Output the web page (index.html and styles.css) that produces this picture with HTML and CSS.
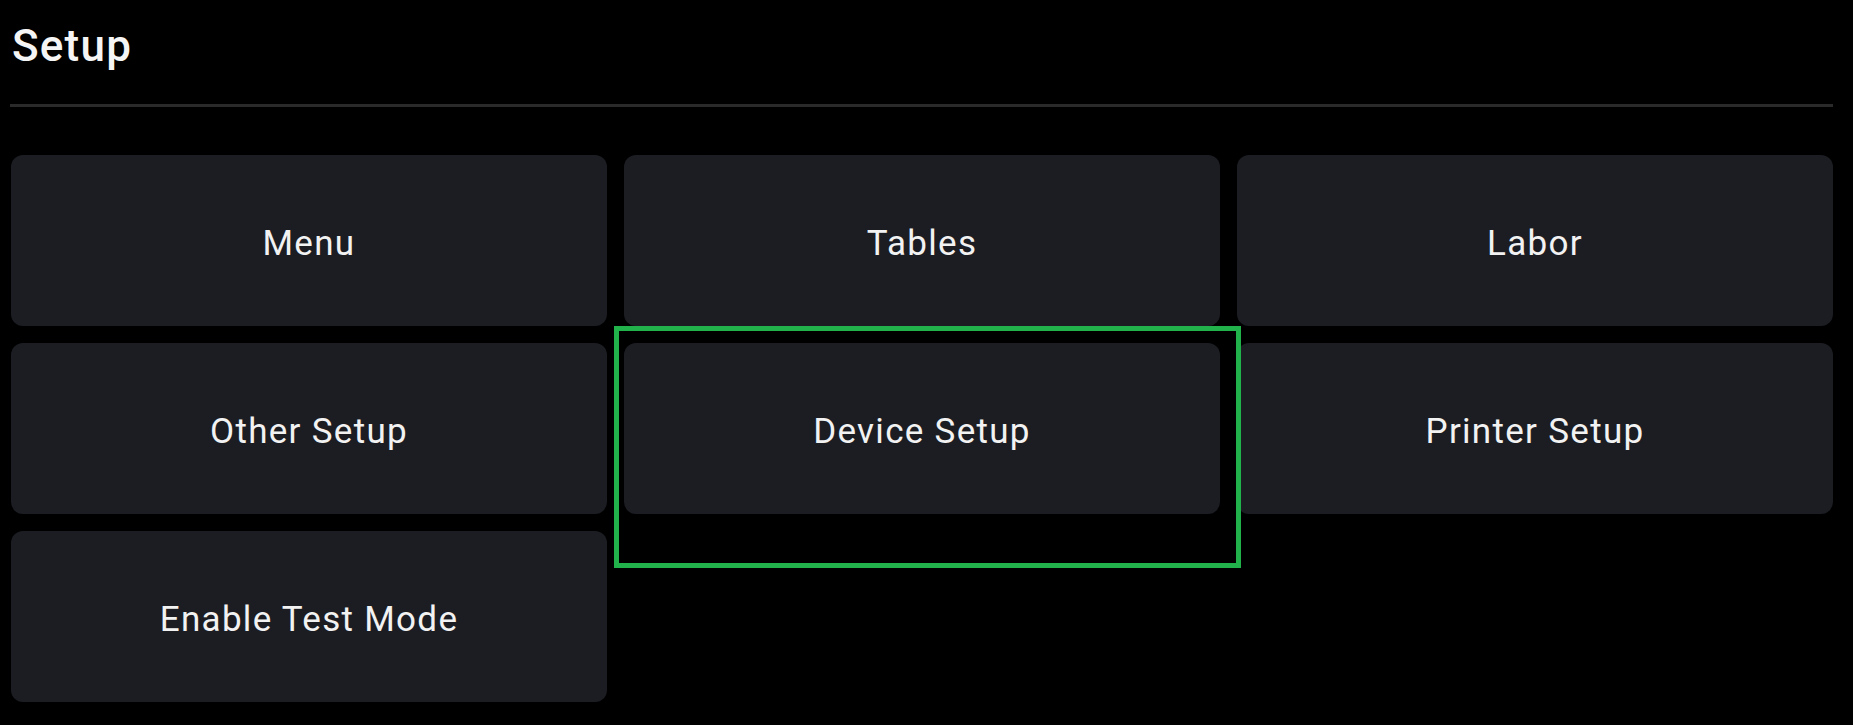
FILE: index.html
```html
<!DOCTYPE html>
<html lang="en">
<head>
<meta charset="utf-8">
<title>Setup</title>
<link rel="stylesheet" href="styles.css">
</head>
<body>
<main class="page">
  <header class="header">
    <h1 class="title">Setup</h1>
  </header>
  <hr class="divider">
  <section class="grid">
    <button class="tile">Menu</button>
    <button class="tile">Tables</button>
    <button class="tile">Labor</button>
    <button class="tile">Other Setup</button>
    <button class="tile">Device Setup</button>
    <button class="tile">Printer Setup</button>
    <button class="tile">Enable Test Mode</button>
  </section>
  <div class="highlight"></div>
</main>
</body>
</html>
```

FILE: styles.css
```css
html, body {
  margin: 0;
  padding: 0;
  background: #000;
  height: 100%;
  overflow: hidden;
}

.page {
  position: relative;
  padding: 0 20px 0 11px;
  font-family: Roboto, "Noto Sans", sans-serif;
  color: #f2f2f2;
}

.header {
  padding-top: 21px;
  height: 104px;
  box-sizing: border-box;
  padding-left: 1px;
}

.title {
  margin: 0;
  font-size: 44px;
  line-height: 50px;
  font-weight: 500;
  letter-spacing: 1.2px;
  color: #f5f5f5;
}

.divider {
  margin: 0 0 48px -1px;
  border: 0;
  height: 3px;
  background: #2a2a2a;
}

.grid {
  display: grid;
  grid-template-columns: repeat(3, 1fr);
  grid-auto-rows: 171px;
  column-gap: 17px;
  row-gap: 17px;
}

.tile {
  background: #1b1d23;
  border: 0;
  border-radius: 12px;
  color: #f2f2f2;
  font-family: Roboto, "Noto Sans", sans-serif;
  font-size: 35px;
  letter-spacing: 1.3px;
  padding: 5px 0 0;
  cursor: pointer;
}

.highlight {
  position: absolute;
  left: 614px;
  top: 326px;
  width: 627px;
  height: 242px;
  box-sizing: border-box;
  border: 5px solid #22b24c;
  pointer-events: none;
}
```
